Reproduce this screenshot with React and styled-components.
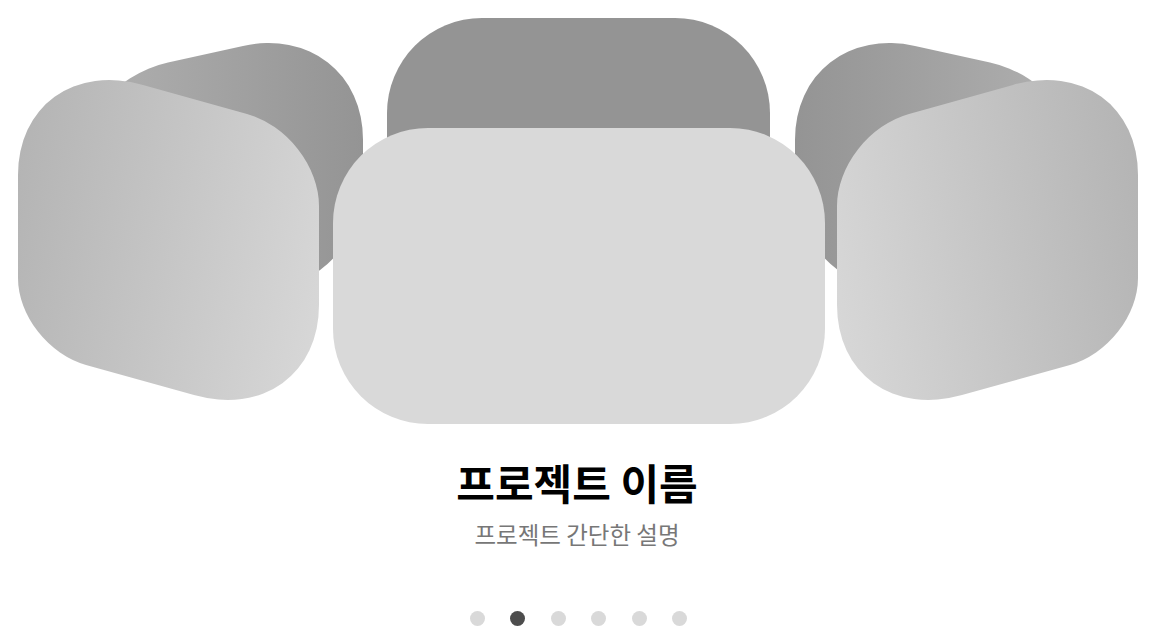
import React from 'react'
import styled, { createGlobalStyle } from 'styled-components';

const GlobalStyle = createGlobalStyle`
  html, body {
    margin: 0;
    padding: 0;
    background: #ffffff;
  }
  body {
    font-family: "Noto Sans CJK KR", "Noto Sans", sans-serif;
  }
`

// one ring of six project cards, drawn as it sits in the tilted coverflow
const slides = [
    { id: 'back', left: 387, top: 18, width: 383, height: 250, radius: '95px', skew: 0, layer: 1, bg: '#949494' },
    { id: 'left-back', left: 68, top: 52, width: 295, height: 250, radius: '100px 120px 80px 120px', skew: -12.4, layer: 1, bg: 'linear-gradient(to right, #b2b2b2, #949494)' },
    { id: 'right-back', left: 795, top: 52, width: 295, height: 250, radius: '120px 100px 120px 80px', skew: 12.4, layer: 1, bg: 'linear-gradient(to left, #b2b2b2, #949494)' },
    { id: 'left-front', left: 18, top: 92, width: 301, height: 296, radius: '125px 72px 125px 68px', skew: 15.6, layer: 2, bg: 'linear-gradient(100deg, #b2b2b2, #d9d9d9)' },
    { id: 'right-front', left: 837, top: 92, width: 301, height: 296, radius: '72px 125px 68px 125px', skew: -15.6, layer: 2, bg: 'linear-gradient(260deg, #b2b2b2, #d9d9d9)' },
    { id: 'active', left: 333, top: 128, width: 492, height: 296, radius: '95px', skew: 0, layer: 3, bg: '#d9d9d9' },
]

const App = () => {
    return (
        <Page>
            <GlobalStyle />
            <Stage>
                {slides.map((s) => (
                    <Slide
                        key={s.id}
                        $radius={s.radius}
                        $layer={s.layer}
                        $bg={s.bg}
                        style={{
                            left: s.left,
                            top: s.top,
                            width: s.width,
                            height: s.height,
                            transform: `skewY(${s.skew}deg)`,
                        }}
                    />
                ))}
            </Stage>
            <Title>프로젝트 이름</Title>
            <Description>프로젝트 간단한 설명</Description>
            <Dots>
                {[0, 1, 2, 3, 4, 5].map((i) => (
                    <Dot key={i} $active={i === 1} />
                ))}
            </Dots>
        </Page>
    )
}

const Page = styled.div`
display: flex;
flex-direction: column;
align-items: center;
width: 100%;
min-height: 644px;
overflow: hidden;
`

const Stage = styled.div`
position: relative;
width: 1154px;
height: 440px;
flex-shrink: 0;
`

const Slide = styled.div`
position: absolute;
border-radius: ${(p) => p.$radius};
background: ${(p) => p.$bg};
z-index: ${(p) => p.$layer};
transform-origin: center center;
`

const Title = styled.h2`
margin: 14px 0 0;
font-size: 42px;
line-height: 56px;
font-weight: 700;
color: #000000;
`

const Description = styled.p`
margin: 8px 0 0;
font-size: 23.5px;
line-height: 32px;
font-weight: 400;
color: #777777;
`

const Dots = styled.div`
display: flex;
gap: 25.5px;
margin: 61px 0 0 3px;
`

const Dot = styled.span`
display: block;
width: 15px;
height: 15px;
border-radius: 50%;
background: ${(p) => (p.$active ? '#4d4d4d' : '#d9d9d9')};
`

export default App;
